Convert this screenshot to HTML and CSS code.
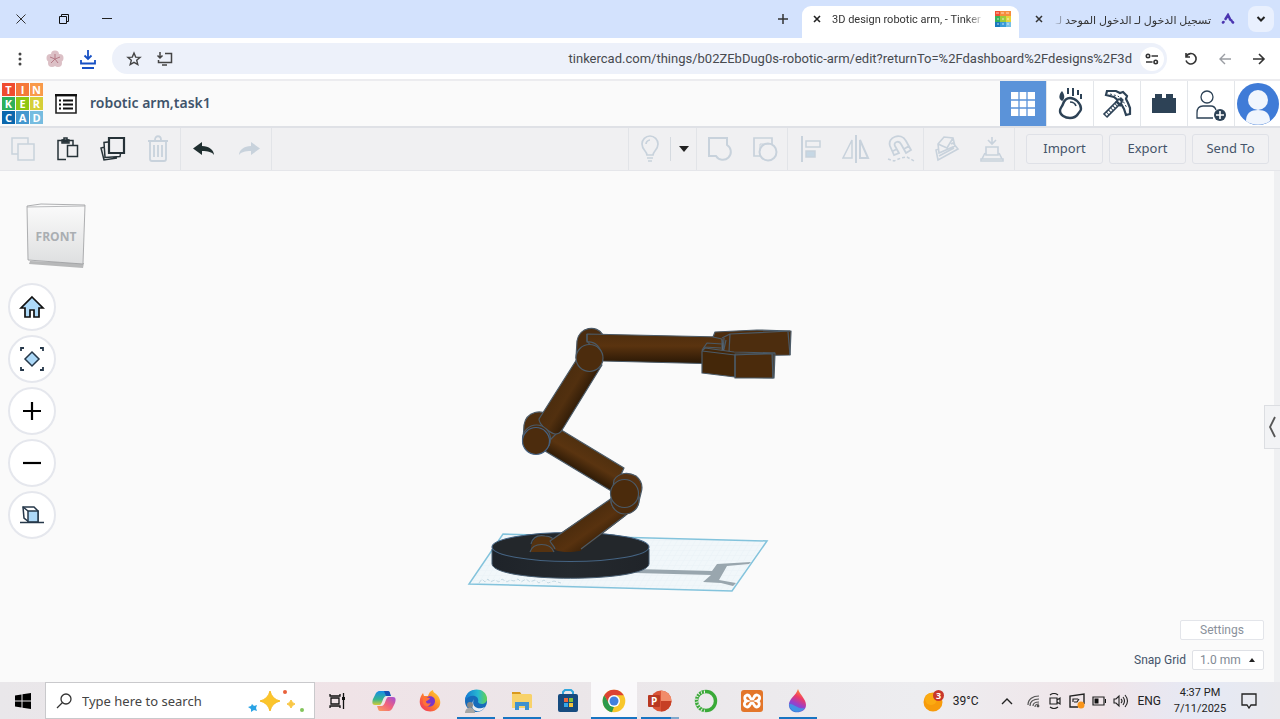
FILE: index.html
```html
<!DOCTYPE html>
<html lang="en">
<head>
<meta charset="utf-8">
<title>3D design robotic arm, - Tinkercad</title>
<link rel="stylesheet" href="styles.css">
</head>
<body>
<div class="tabstrip">
  <div class="window-controls">
    <button class="plain" aria-label="Close window"><svg width="12" height="12"><path d="M1.500 1.500l9 9m0-9l-9 9" stroke="#333" fill="none"/></svg></button>
    <button class="plain" aria-label="Restore window"><svg width="12" height="12"><path d="M1.500 3.500h7v7h-7zM3.500 3V1.500h7v7H9" stroke="#111" fill="none"/></svg></button>
    <button class="plain" aria-label="Minimize window"><svg width="12" height="12"><path d="M1 5.500h10" stroke="#222"/></svg></button>
  </div>
  <button class="plain new-tab" aria-label="New tab"><svg width="12" height="12"><path d="M6 1v10M1 6h10" stroke="#333" stroke-width="1.500"/></svg></button>
  <div class="tab tab-active">
    <button class="plain" aria-label="Close tab"><svg width="10" height="10"><path d="M2 2l6 6m0-6l-6 6" stroke="#222" stroke-width="1.600"/></svg></button>
    <span class="tab-title">3D design robotic arm, - Tinker</span>
    <svg width="16" height="16" viewBox="0 0 16 16"><path fill="#f04d32" d="M0 0h5v5H0z"/><path fill="#f68d3c" d="M5 0h11v5H5z"/><path fill="#35b25c" d="M0 5h5v6H0z"/><path fill="#9ccb3b" d="M5 5h6v6H5z"/><path fill="#e5d43b" d="M11 5h5v6h-5z"/><path fill="#1878bd" d="M0 11h5v5H0z"/><path fill="#399bd8" d="M5 11h6v5H5z"/><path fill="#78c0e4" d="M11 11h5v5h-5z"/><path d="M1 2h3M6 2h3M11 2h3M2 8h2M7 8h2M12 8h2M2 13h2M7 13h2M12 13h2" stroke="#fff" opacity=".7"/></svg>
  </div>
  <div class="tab tab-idle">
    <button class="plain" aria-label="Close tab"><svg width="10" height="10"><path d="M2 2l6 6m0-6l-6 6" stroke="#333" stroke-width="1.500"/></svg></button>
    <span class="tab-title" dir="rtl" lang="ar">تسجيل الدخول لـ الدخول الموحد لـ</span>
    <svg width="14" height="12" viewBox="0 0 14 12"><path d="M2 9.500l.5-.5M4.500 6L7 2l2 4M12 9.500l-.5-.5M9 6.500l1.500 1" fill="none" stroke="#4b35b0" stroke-width="2.500" stroke-linecap="round"/></svg>
  </div>
  <button class="plain tab-search" aria-label="Search tabs"><svg width="12" height="12"><path d="M2.500 4L6 7.500 9.500 4" fill="none" stroke="#222" stroke-width="2"/></svg></button>
</div>

<div class="addressbar">
  <button class="plain b-menu" aria-label="Browser menu"><svg width="6" height="16"><g fill="#444"><circle cx="3" cy="3" r="1.500"/><circle cx="3" cy="8" r="1.500"/><circle cx="3" cy="13" r="1.500"/></g></svg></button>
  <button class="plain b-left" aria-label="Profile"><svg width="18" height="18" viewBox="0 0 18 18"><g fill="#dcc0c6"><circle cx="9" cy="4.500" r="4"/><circle cx="13.500" cy="8" r="4"/><circle cx="12" cy="13" r="4"/><circle cx="6" cy="13" r="4"/><circle cx="4.500" cy="8" r="4"/></g><path d="M9 9V4m0 5l5-2M9 9l3 4M9 9l-4 4M9 9L4 7" stroke="#b57a86"/></svg></button>
  <button class="plain b-left" aria-label="Downloads"><svg width="16" height="20" viewBox="0 0 16 20"><path d="M8 1v9M4.500 6.500L8 10l3.500-3.500M1 11v3.500h14V11M2 19h12" fill="none" stroke="#1750c4" stroke-width="1.800"/></svg></button>
  <div class="omnibox">
    <button class="plain" aria-label="Bookmark"><svg width="16" height="16" viewBox="0 0 16 16"><path d="M8 2l1.700 4.100 4.400.3-3.400 2.900 1.100 4.300L8 11.300l-3.800 2.300 1.100-4.300-3.400-2.900 4.400-.3z" fill="none" stroke="#444" stroke-width="1.400"/></svg></button>
    <button class="plain" aria-label="Install app"><svg width="17" height="16" viewBox="0 0 17 16"><path d="M9 2.500h6.500v9h-13V9M6 14h5M4 1v6M1.500 4.500L4 7l2.500-2.500" fill="none" stroke="#444" stroke-width="1.500"/></svg></button>
    <input class="url" type="text" aria-label="Address" value="tinkercad.com/things/b02ZEbDug0s-robotic-arm/edit?returnTo=%2Fdashboard%2Fdesigns%2F3d">
    <button class="plain site-info" aria-label="Site information"><svg width="14" height="12" viewBox="0 0 14 12"><g fill="none" stroke="#333" stroke-width="1.600"><circle cx="3" cy="3" r="1.700"/><path d="M6.500 3H13M1 9h6.500"/><circle cx="10.700" cy="9" r="1.700"/></g></svg></button>
  </div>
  <button class="plain" aria-label="Reload"><svg width="14" height="14" viewBox="0 0 14 14"><path d="M2.500 4A5.200 5.200 0 1 1 2 8.500M2 1v4h4" fill="none" stroke="#333" stroke-width="1.600"/></svg></button>
  <button class="plain" aria-label="Forward"><svg width="14" height="14"><path d="M13 7H2m5-5L2 7l5 5" fill="none" stroke="#9a9da3" stroke-width="1.400"/></svg></button>
  <button class="plain" aria-label="Back"><svg width="14" height="14"><path d="M1 7h11M7 2l5 5-5 5" fill="none" stroke="#333" stroke-width="1.600"/></svg></button>
</div>

<header class="app-header">
  <a class="logo" href="#" aria-label="Tinkercad"><b class="c1">T</b><b class="c2">I</b><b class="c3">N</b><b class="c4">K</b><b class="c5">E</b><b class="c6">R</b><b class="c7">C</b><b class="c8">A</b><b class="c9">D</b></a>
  <button class="plain" aria-label="Designs"><svg width="22" height="20" viewBox="0 0 22 20"><path d="M1 1h20v18H1z" fill="#fff" stroke="#222" stroke-width="1.600"/><path d="M0 1.200h22" stroke="#111" stroke-width="2.400"/><path d="M8 6.500h10M8 10.500h10M8 14.500h10M4 6.500h2M4 10.500h2M4 14.500h2" stroke="#111" stroke-width="2"/></svg></button>
  <h1 class="design-name">robotic arm,task1</h1>
  <nav class="modes">
    <button class="mode mode-on" aria-label="3D design"><svg width="24" height="24"><path d="M0 0h24v24H0z" fill="#fff"/><path d="M8 0v24M16 0v24M0 8h24M0 16h24" stroke="#5b93d9" stroke-width="1.300"/></svg></button>
    <button class="mode" aria-label="Sim lab"><svg width="26" height="34" viewBox="0 0 26 34"><path d="M13 11c5 0 11 5 11 11 0 2-2 3-3 5-2 3-4 4-8 4-5 0-10-3-10-7 0-3 2-4 3-7s3-6 7-6z" fill="#fff" stroke="#2d4256" stroke-width="2.400"/><path d="M13 15c3 0 5 1 6 4" fill="none" stroke="#2d4256" stroke-width="1.600"/><path d="M11 1v6M16 1v8M21 3v5M24 7v5" stroke="#2d4256" stroke-width="2"/><path d="M5 4c3 4 3 8 0 10-4-2-3-7 0-10z" fill="#2d4256"/></svg></button>
    <button class="mode" aria-label="Blocks"><svg width="30" height="30" viewBox="0 0 30 30"><path d="M5 2h9l4 2 3-1 4 4-1 3 2 4 2 5v6l-4 1-2-6-4-7-6-5-8-2z" fill="#fff" stroke="#2d4256" stroke-width="2.200"/><path d="M8 5l8 2 5 5 4 7" fill="none" stroke="#2d4256" stroke-dasharray="2 2"/><path d="M19 11L3 27" stroke="#2d4256" stroke-width="6"/><path d="M18 12L4 26" stroke="#fff" stroke-width="2.500" stroke-dasharray="2 1"/><path d="M18 9l3 3M14 12l5 5" stroke="#2d4256" stroke-width="2.500"/></svg></button>
    <button class="mode" aria-label="Bricks"><svg width="26" height="22"><path d="M1 5h3V1h7v4h4V1h7v4h3v15H1z" fill="#2d4256"/></svg></button>
    <button class="mode" aria-label="Invite people"><svg width="32" height="34" viewBox="0 0 32 34"><g fill="none" stroke="#2d4256" stroke-width="1.300"><circle cx="12" cy="10" r="6"/><path d="M18 31H2v-5c0-5 3-7 6-7h8c2 0 4 1 5 4"/></g><circle cx="25" cy="28" r="6" fill="#2d4256"/><path d="M25 24v8M21 28h8" stroke="#fff" stroke-width="1.600"/></svg></button>
    <button class="plain avatar" aria-label="Account"><svg width="44" height="44" viewBox="0 0 44 44"><circle cx="22" cy="22" r="21" fill="#3f7bd7"/><circle cx="22" cy="18" r="10" fill="#f0f5fd"/><path d="M10 39c0-8 5-11 12-11s12 3 12 11a21 21 0 0 1-24 0z" fill="#f0f5fd"/></svg></button>
  </nav>
</header>

<div class="toolbar">
  <div class="group">
    <button class="tool" aria-label="Copy"><svg width="24" height="24" viewBox="0 0 24 24" class="off"><path d="M7 17H1V1h16v6M7 7h16v16H7z"/></svg></button>
    <button class="tool" aria-label="Paste"><svg width="24" height="24" viewBox="0 0 24 24" class="on"><path d="M10 22.500H2v-19h5M13 3.500h4V8M6 3v3h7V3h-2V1H8v2zM11.500 8.500h10v11h-10z"/><path d="M7 3h5v2H7z" fill="#263238"/></svg></button>
    <button class="tool" aria-label="Duplicate"><svg width="26" height="26" viewBox="0 0 26 26" class="on"><path d="M9 2h15v15H9z" stroke-width="2.200"/><path d="M8 6l-4 .5 1 15 15-1 .5-3M5 11l-4 1 3 12 13-2"/></svg></button>
    <button class="tool" aria-label="Delete"><svg width="22" height="28" viewBox="0 0 22 28" class="off"><path d="M1 6h20M8 5c0-5 6-5 6 0M3 7v17c0 2 1 2 2 2h12c2 0 2-1 2-2V7M7 10v12M11 10v12M15 10v12" stroke-width="1.800"/></svg></button>
  </div>
  <div class="group">
    <button class="tool" aria-label="Undo"><svg width="22" height="16" viewBox="0 0 22 16"><path d="M9 1v4c7 0 12 4 12 9-2-3-6-4-12-4v4L0 7.500z" fill="#202f30"/></svg></button>
    <button class="tool" aria-label="Redo"><svg width="22" height="16" viewBox="0 0 22 16"><path d="M13 1v4C6 5 1 9 1 14c2-3 6-4 12-4v4l9-6.500z" fill="#c8d2dc"/></svg></button>
  </div>
  <div class="group group-first">
    <button class="tool bulb" aria-label="Show all"><svg width="20" height="28" viewBox="0 0 20 28" class="off"><path d="M7 20c0-4-5-5-5-11a8 8 0 0 1 16 0c0 6-5 7-5 11zM7 23h6M8 26h4M10 5c-2 0-4 2-4 4" stroke-width="1.700"/></svg></button>
    <button class="tool caret" aria-label="Visibility options"><svg width="10" height="6"><path d="M0 0h10L5 6z" fill="#222"/></svg></button>
  </div>
  <div class="group">
    <button class="tool" aria-label="Group"><svg width="26" height="26" viewBox="0 0 26 26" class="off"><path d="M2 2h18v7a8 8 0 1 1-11 11L2 20z" stroke-width="2"/></svg></button>
    <button class="tool" aria-label="Ungroup"><svg width="26" height="26" viewBox="0 0 26 26" class="off"><path d="M8 20H2V2h18v6" stroke-width="1.700"/><circle cx="16" cy="16" r="8.500" stroke-width="2"/><path d="M8 15V8h9" stroke-width="1"/></svg></button>
  </div>
  <div class="group">
    <button class="tool" aria-label="Align"><svg width="22" height="26" viewBox="0 0 22 26" class="off"><path d="M2 0v26" stroke-width="2"/><path d="M6 5h14v6H6z"/><path d="M6 15h9v6H6z" fill="#c6d7e4"/></svg></button>
    <button class="tool" aria-label="Mirror"><svg width="28" height="28" viewBox="0 0 28 28" class="off"><path d="M14 0v28" stroke-width="2"/><path d="M10 5v18H1z"/><path d="M18 5v18h8z" stroke-width="2"/></svg></button>
    <button class="tool" aria-label="Magnet"><svg width="28" height="28" viewBox="0 0 28 28" class="off"><path d="M7 20L3 11C0 2 14-3 19 6l5 9-5 3-5-9c-2-4-8-2-6 2l4 7zM6 16l4-2M17 14l5-3" stroke-width="1.800"/><path d="M1 24l6 2 7-3 6-1 7 4" stroke-dasharray="3 2"/></svg></button>
  </div>
  <div class="group">
    <button class="tool" aria-label="Cruise"><svg width="28" height="28" viewBox="0 0 28 28" class="off"><path d="M6 14l-3 1 2 10 20-11-5-6-2 1M6 18L5 9l6-7 9 1 2 8zM5 9l9 4 6-10M6 21l15-8" stroke-width="1.600"/></svg></button>
    <button class="tool" aria-label="Drop to workplane"><svg width="24" height="26" viewBox="0 0 24 26" class="off"><path d="M12 1v7M8 4l4 4 4-4M6 19v-8h12v8zM5 17l-3 6h20l-3-6M1 23h22v2H1z" stroke-width="1.600"/></svg></button>
  </div>
  <div class="actions">
    <button class="action">Import</button>
    <button class="action">Export</button>
    <button class="action">Send To</button>
  </div>
</div>

<main class="workspace">
  <svg class="scene" viewBox="0 171 1280 511" role="img" aria-label="Robotic arm model on the workplane">
    <defs>
      <linearGradient id="tubeH" x1="0" y1="0" x2="0" y2="1"><stop offset="0" stop-color="#4e2e0e"/><stop offset=".4" stop-color="#5a330f"/><stop offset="1" stop-color="#281705"/></linearGradient>
      <linearGradient id="tubeA" gradientUnits="userSpaceOnUse" x1="556" y1="386" x2="582" y2="402"><stop offset="0" stop-color="#4a2c0e"/><stop offset=".5" stop-color="#52300f"/><stop offset="1" stop-color="#2d1a07"/></linearGradient>
      <linearGradient id="tubeB" gradientUnits="userSpaceOnUse" x1="594" y1="450" x2="580" y2="474"><stop offset="0" stop-color="#50300f"/><stop offset=".45" stop-color="#5a3410"/><stop offset="1" stop-color="#2a1805"/></linearGradient>
      <linearGradient id="tubeC" gradientUnits="userSpaceOnUse" x1="581" y1="519" x2="598" y2="543"><stop offset="0" stop-color="#4c2c0d"/><stop offset=".5" stop-color="#58320f"/><stop offset="1" stop-color="#382008"/></linearGradient>
      <linearGradient id="plate" x1="0" y1="0" x2="1" y2="0"><stop offset="0" stop-color="#1e2329"/><stop offset=".5" stop-color="#24292e"/><stop offset="1" stop-color="#202429"/></linearGradient>
      <pattern id="grid" width="6" height="5" patternUnits="userSpaceOnUse" patternTransform="skewX(-30)"><path d="M0 0h6v5" fill="none" stroke="#e6f0f5" stroke-width=".7"/></pattern>
    </defs>
    <path d="M503 534l264 7-35 50-263-7z" fill="#f1f7fa"/>
    <path d="M503 534l264 7-35 50-263-7z" fill="url(#grid)" stroke="#83c3dc" stroke-width="1.500"/>
    <path d="M479 583l3-4 3 3 3-3 2 3 5-2 4 2 3-3 5 3 3-2 4 1 4-2 3 3 5-3 4 3 5-2 4 3 5-3 4 3 6-2 7 2" fill="none" stroke="#c5dae4" stroke-dasharray="4 2"/>
    <path d="M636 569l76 2 5-7 34-2-2 2-22 2-8 14 17 3-3 3-12-3-18-1 8-7-75-2z" fill="#99a6ae"/>
    <path d="M492 549v15c2 19 155 19 157 0v-15z" fill="url(#plate)" stroke="#465c70"/>
    <ellipse cx="570.500" cy="547" rx="78.500" ry="14.500" fill="#23272b" stroke="#456483" stroke-width="1.100"/>
    <g stroke="#4b5a67" stroke-width="1.200" stroke-linejoin="round">
      <path d="M531 547c2-10 8-12 14-11 7 0 9 4 10 8l-2 8h-22z" fill="#553210" stroke="none"/>
      <path d="M531 544c2-8 8-9 14-8 6 0 9 3 10 7M530 552c3-10 20-10 24 0" fill="none"/>
      <path d="M612 498l-63 43c2 4 5 5 6 9 8 3 18 2 25 1l48-37z" fill="url(#tubeC)" stroke="none"/>
      <path d="M612 498l-62 43c2 4 4 5 5 8M626 515l-45 34" fill="none"/>
      <path d="M548 422l76 46-11 24-68-41z" fill="url(#tubeB)"/>
      <path d="M614 480c5-8 15-8 22-4 6 5 7 11 5 17l-3 12c-5 11-23 12-27-3z" fill="#553110"/>
      <circle cx="625" cy="500" r="14" fill="#4b2b0d"/>
      <circle cx="624.500" cy="493.500" r="14" fill="#4b2b0c"/>
      <path d="M523 440l1-15c2-13 18-18 27-7l8 13-10 10z" fill="#4e2e0f"/>
      <path d="M577 359l-38 60c0 7 12 14 16 15 3 0 6-2 7-4l40-65z" fill="url(#tubeA)"/>
      <circle cx="536.500" cy="439" r="14" fill="#4c2c0d"/>
      <circle cx="536" cy="441" r="13.500" fill="#4c2c0d" stroke="#466282"/>
      <path d="M576 358l1-17c2-14 20-17 26-6l1 25z" fill="#4b2c0f"/>
      <path d="M587 334l135 3v27l-119-3-16-20z" fill="url(#tubeH)"/>
      <path d="M587 334v8c9-1 14 6 15 14" fill="none"/>
      <circle cx="589.500" cy="358" r="13.500" fill="#4c2c0d"/>
      <path d="M713 337l2-5 42-2 34 1-1 24-65 1-3-17z" fill="#4d2d0e"/>
      <path d="M722 338l8-4 60-3M730 334l-1 18M724 338l-1 13M726 340l-2 9M788 332l2 23" fill="none"/>
      <path d="M702 350l5-7 15 1v7M704 347l17 1" fill="#51300f"/>
      <path d="M702 351l3-3 29 4 41 1-1 25-39-1-33-4z" fill="#442709"/>
      <path d="M735 354v24h38v-24z" fill="#4b2b0c"/>
      <path d="M702 351l33 4 40-2M735 355v22M772 354l1 24" fill="none"/>
    </g>
  </svg>
  <div class="overlay">
    <div class="left-rail">
      <button class="plain cube" aria-label="View cube"><svg width="60" height="66" viewBox="0 0 60 66"><defs><linearGradient id="face" x1="0" y1="0" x2="0" y2="1"><stop offset="0" stop-color="#fbfbfb"/><stop offset="1" stop-color="#dedfe0"/></linearGradient></defs><path d="M4 58l54 2-1 5-54-4z" fill="#b7b8b9"/><path d="M1 3l14-2 44 1-2 59-55-4z" fill="url(#face)" stroke="#9a9c9e" stroke-width=".8"/><path d="M1 4l58-1" fill="none" stroke="#a8aaac" stroke-width=".8"/><text x="30" y="38" text-anchor="middle" class="cube-text">FRONT</text></svg></button>
      <button class="round" aria-label="Home view"><svg width="26" height="24" viewBox="0 0 26 24"><path d="M13 2l11 11h-4v9h-5v-7h-4v7H6v-9H2z" fill="#add9f8" stroke="#111" stroke-width="1.700"/></svg></button>
      <button class="round" aria-label="Fit view"><svg width="26" height="26" viewBox="0 0 26 26" fill="none" stroke="#26384a"><path d="M13 6l7 7-7 7-7-7z" fill="#add9f8" stroke-width="1.500"/><path d="M2 5V2h3M21 2h3v3M24 21v3h-3M5 24H2v-3" stroke-width="1.800"/></svg></button>
      <button class="round" aria-label="Zoom in"><svg width="20" height="20"><path d="M10 1v18M1 10h18" stroke="#000" stroke-width="2.200"/></svg></button>
      <button class="round" aria-label="Zoom out"><svg width="20" height="20"><path d="M1 10h18" stroke="#000" stroke-width="2.200"/></svg></button>
      <button class="round" aria-label="Orthographic view"><svg width="24" height="20" viewBox="0 0 24 20"><path d="M3 2h11l4 4v11H9l-5-4z" fill="#fff" stroke="#26384a" stroke-width="1.500"/><path d="M8 6h10v11H8z" fill="#add9f8" stroke="#26384a" stroke-width="1.500"/><path d="M3 2l5 4M0 17.500h24" stroke="#26384a" stroke-width="1.500"/></svg></button>
    </div>
    <div class="snap">
      <button class="settings">Settings</button>
      <div class="snap-row">
        <label for="snap">Snap Grid</label>
        <div class="select-box"><select id="snap"><option>1.0 mm</option></select><svg width="6" height="4"><path d="M0 4h6L3 0z" fill="#222"/></svg></div>
      </div>
    </div>
  </div>
  <aside class="edge">
    <button class="expand" aria-label="Open shapes panel"><svg width="8" height="22"><path d="M7 1L2 11l5 10" fill="none" stroke="#555" stroke-width="1.800"/></svg></button>
  </aside>
</main>

<footer class="taskbar">
  <button class="task start" aria-label="Start"><svg width="16" height="16"><path d="M0 2.500l6.500-1v6H0zM7.500 1.300L16 0v7.500H7.500zM0 8.500h6.500v6l-6.500-1zM7.500 8.500H16V16l-8.500-1.300z" fill="#000"/></svg></button>
  <div class="search">
    <svg width="16" height="16"><circle cx="10" cy="6" r="5" fill="none" stroke="#333" stroke-width="1.300"/><path d="M6.500 9.500L1 15" stroke="#333" stroke-width="1.300"/></svg>
    <input type="text" aria-label="Search" placeholder="Type here to search">
    <svg width="58" height="26" viewBox="0 0 58 26"><path d="M22 3q2 8 10 10-8 2-10 10-2-8-10-10 8-2 10-10z" fill="#fbc52c" stroke="#f8bc22" stroke-linejoin="round"/><path d="M43 12q1 3 4 4-3 1-4 4-1-3-4-4 3-1 4-4z" fill="#f9c746" stroke="#f9c746" stroke-linejoin="round"/><path d="M4 16l2 2 3-1-1 3 1 3-3-1-3 2V21l-3-2 3-1z" fill="#2aa3e5"/><circle cx="37" cy="4" r="2" fill="#e9613a"/><circle cx="54" cy="22" r="2" fill="#83c45b"/></svg>
  </div>
  <div class="apps">
    <button class="task" aria-label="Task view"><svg width="18" height="16" viewBox="0 0 18 16"><path d="M1 1v2h10V1M2 5h8v6H2zM1 15v-2h10v2M14.500 0v16" fill="none" stroke="#111" stroke-width="1.300"/><path d="M13 4h3v3h-3z" fill="#111"/></svg></button>
    <button class="task" aria-label="Copilot"><svg width="24" height="22" viewBox="0 0 24 22"><defs><linearGradient id="cpa" x1="0" y1="0" x2="0" y2="1"><stop stop-color="#168ce8"/><stop offset=".6" stop-color="#38b58e"/><stop offset="1" stop-color="#d5cc36"/></linearGradient><linearGradient id="cpb" x1="1" y1="0" x2="0" y2="1"><stop stop-color="#a04fd8"/><stop offset=".5" stop-color="#f1617c"/><stop offset="1" stop-color="#faa35c"/></linearGradient></defs><path d="M7 1h9c2 0 2 3 3 5h-5c-3 0-4 9-6 9H3c-3 0-3-3-2-6l3-6c1-1 2-2 3-2z" fill="url(#cpa)"/><path d="M17 21H8c-2 0-2-3-3-5h5c3 0 4-9 6-9h5c3 0 3 3 2 6l-3 6c-1 1-2 2-3 2z" fill="url(#cpb)"/><path d="M12 1h4c2 0 2 3 3 5h-5z" fill="#1650b5"/></svg></button>
    <button class="task" aria-label="Firefox"><svg width="22" height="24" viewBox="0 0 22 24"><defs><linearGradient id="fox" x1="1" y1="0" x2="0" y2="1"><stop stop-color="#ffdf34"/><stop offset=".5" stop-color="#ff8129"/><stop offset="1" stop-color="#ee2868"/></linearGradient></defs><path d="M14 1c0 3 3 3 5 6 3 4 3 9 0 12-5 6-16 4-18-4-1-5 1-8 3-11l1 3 4 0c1-3 2-5 5-6z" fill="url(#fox)"/><path d="M7 9c3-3 9-2 9 3 0 4-4 7-8 5-3-1-3-5-1-8z" fill="#7b36c8"/><path d="M4 9c3-2 4 0 7 0-1 3-4 2-4 4 1 2 4 2 5 0-1 5-6 6-8 1z" fill="#ff7237"/></svg></button>
    <button class="task running" aria-label="Edge"><svg width="24" height="24" viewBox="0 0 24 24"><defs><linearGradient id="edg"><stop stop-color="#1478d4"/><stop offset=".6" stop-color="#27b9d0"/><stop offset="1" stop-color="#64d34e"/></linearGradient></defs><circle cx="12" cy="12" r="11" fill="#176bba"/><path d="M1 12C1-3 23-3 23 10c0 6-8 6-9 3 2-7-9-9-13-1z" fill="url(#edg)"/><path d="M10 10c-3 6 2 12 11 8-5 8-18 4-11-8z" fill="#ebedf1"/><circle cx="6" cy="16" r="3" fill="#888"/><path d="M1 24c0-7 10-7 10 0z" fill="#a6a6a6"/></svg></button>
    <button class="task running" aria-label="File Explorer"><svg width="22" height="20" viewBox="0 0 22 20"><path d="M1 1h8l2 3H1z" fill="#d99a1e"/><path d="M1 3h19l1 1v13H1z" fill="#f8d26a"/><path d="M4 19v-8h14v8h-4v-4H8v4z" fill="#3e91ce"/></svg></button>
    <button class="task" aria-label="Microsoft Store"><svg width="22" height="24" viewBox="0 0 22 24"><path d="M6 6V3l2-2h6l2 2v3" fill="none" stroke="#30a6dc" stroke-width="2"/><rect x="1" y="5" width="20" height="18" rx="2" fill="#164b7f"/><path d="M7 9h4v4H7z" fill="#ed663d"/><path d="M12 9h4v4h-4z" fill="#83be3c"/><path d="M7 14h4v4H7z" fill="#36a7e8"/><path d="M12 14h4v4h-4z" fill="#f6c33b"/></svg></button>
    <button class="task running current" aria-label="Chrome"><svg width="24" height="24" viewBox="0 0 24 24"><circle cx="12" cy="12" r="11.300" fill="#f8c72c"/><path d="M2.200 6.300A11.300 11.300 0 0 1 21.800 6.300H12L7 15z" fill="#dc4334"/><path d="M2.200 6.300L7.100 14.800 12 17.700l-2 5.500A11.300 11.300 0 0 1 2.200 6.300z" fill="#2d9a4b"/><circle cx="12" cy="12" r="6" fill="#fff"/><circle cx="12" cy="12" r="4.500" fill="#4280df"/></svg></button>
    <button class="task running split" aria-label="PowerPoint"><svg width="24" height="22" viewBox="0 0 24 22"><circle cx="13" cy="11" r="10.500" fill="#d95336"/><path d="M13 .5A10.500 10.500 0 0 1 23.500 11H13z" fill="#f18b69"/><path d="M13 11h10.500A10.500 10.500 0 0 1 13 21.500z" fill="#c64025"/><rect y="5" width="12" height="12" rx="1" fill="#b83821"/><text x="3" y="15" class="ppt-letter">P</text></svg></button>
    <button class="task" aria-label="Anaconda"><svg width="24" height="24" viewBox="0 0 24 24"><circle cx="12" cy="12" r="9.500" fill="none" stroke="#3aaa38" stroke-width="3.400"/><path d="M11 3C4 3 1 8 3 14s6 8 8 8" fill="none" stroke="#ede9eb" stroke-width="3" stroke-dasharray="1 2"/></svg></button>
    <button class="task" aria-label="XAMPP"><svg width="24" height="24" viewBox="0 0 24 24"><rect x="1" y="1" width="22" height="22" rx="3" fill="#e3762a"/><path d="M7 6c4 0 2 4 5 4s1-4 5-4c4 1 3 5 0 6 3 1 3 5 0 6-4 0-2-4-5-4s-1 4-5 4c-4-1-3-5 0-6-3-1-3-5 0-6z" fill="none" stroke="#fff" stroke-width="2.800"/></svg></button>
    <button class="task running" aria-label="Paint 3D"><svg width="20" height="24" viewBox="0 0 20 24"><defs><linearGradient id="drop" x1=".7" y1="0" x2=".3" y2="1"><stop stop-color="#ff9a2c"/><stop offset=".35" stop-color="#ed3a68"/><stop offset=".65" stop-color="#963fcd"/><stop offset="1" stop-color="#3b77d9"/></linearGradient></defs><path d="M10 0c2 6 8 10 8 16 0 9-16 10-17 1C0 10 8 7 10 0z" fill="url(#drop)"/><path d="M1 15c5-1 9 6 16 4-4 6-15 5-16-4z" fill="#34a8ed" opacity=".7"/></svg></button>
  </div>
  <div class="tray">
    <button class="plain weather"><svg width="22" height="24" viewBox="0 0 22 24"><circle cx="10" cy="13" r="9.500" fill="#f79b0b"/><circle cx="8" cy="10" r="6" fill="#fbab12"/><circle cx="15.500" cy="6.500" r="5.500" fill="#c8372b"/><text x="13" y="10" class="badge-text">3</text></svg><span>39°C</span></button>
    <button class="plain" aria-label="Hidden icons"><svg width="12" height="8"><path d="M1 7l5-5 5 5" fill="none" stroke="#222" stroke-width="1.400"/></svg></button>
    <div class="tray-icons">
      <button class="plain" aria-label="Network"><svg width="14" height="14" viewBox="0 0 14 14" fill="none" stroke="#555"><path d="M1 11C1 5 6 2 12 2M3 12c0-5 4-7 9-7M6 12c0-3 3-4 6-4M8 13c0-2 2-3 4-3" stroke-width="1.200"/><circle cx="11" cy="12" r="1" fill="#111"/></svg></button>
      <button class="plain" aria-label="Meet now"><svg width="14" height="16" viewBox="0 0 14 16" fill="none" stroke="#222" stroke-width="1.200"><path d="M2 5h7v6H2zM9 7l3-2v6L9 9M2 2q4-3 8 0M2 14q4 3 8 0"/></svg></button>
      <button class="plain" aria-label="Updates"><svg width="16" height="16" viewBox="0 0 16 16"><path d="M9 14H1V3l14-2v10" fill="none" stroke="#222" stroke-width="1.400"/><path d="M4 9V6h5M10 6l-2 3H5" fill="none" stroke="#222" stroke-width="1.200"/><circle cx="12" cy="12" r="3.500" fill="#f9951b"/></svg></button>
      <button class="plain" aria-label="Battery"><svg width="14" height="10"><path d="M1 1h11v8H1z" fill="none" stroke="#222" stroke-width="1.200"/><path d="M2.500 2.500h4v5h-4zM13 3h1v4h-1z" fill="#111"/></svg></button>
      <button class="plain" aria-label="Volume"><svg width="16" height="14" viewBox="0 0 16 14" fill="none" stroke="#222" stroke-width="1.100"><path d="M1 5h2l3-3v10L3 9H1zM8 5q2 2 0 4M10 3q3 4 0 8M12 1q5 6 0 12"/></svg></button>
    </div>
    <button class="plain lang">ENG</button>
    <button class="plain clock"><span>4:37 PM</span><span>7/11/2025</span></button>
    <button class="plain" aria-label="Notifications"><svg width="16" height="16"><path d="M1 1h14v11h-5l-2 3-2-3H1z" fill="none" stroke="#222" stroke-width="1.300"/></svg></button>
  </div>
</footer>
</body>
</html>
```
FILE: styles.css
```css
* { box-sizing: border-box; }
body {
  margin: 0;
  min-height: 100vh;
  display: flex;
  flex-direction: column;
  font-family: "Noto Sans", "Open Sans", sans-serif;
  font-size: 13px;
  color: #44546a;
  background: #fafafa;
}
svg { display: block; flex: none; }
button { font: inherit; color: inherit; cursor: pointer; }
.plain {
  display: flex;
  align-items: center;
  justify-content: center;
  padding: 0;
  border: 0;
  background: none;
}

/* browser tabs */
.tabstrip {
  display: flex;
  align-items: center;
  height: 38px;
  padding: 0 6px 0 15px;
  background: #d3e2fd;
}
.window-controls { display: flex; gap: 31px; flex: 1; }
.new-tab { margin-right: 13px; }
.tab { display: flex; align-items: center; height: 32px; color: #333; font-size: 11px; }
.tab-title { flex: 1; overflow: hidden; white-space: nowrap; }
.tab-active {
  align-self: flex-end;
  width: 217px;
  gap: 10px;
  padding: 0 8px 6px 10px;
  border-radius: 9px 9px 0 0;
  background: #fff;
}
.tab-active .tab-title {
  font-family: Roboto, "Noto Sans", sans-serif;
  font-size: 11px;
  -webkit-mask-image: linear-gradient(to right, #000 88%, transparent);
  mask-image: linear-gradient(to right, #000 88%, transparent);
}
.tab-idle { width: 229px; gap: 10px; padding: 0 13px 0 15px; }
.tab-idle .tab-title {
  font-family: "Noto Sans", "DejaVu Sans", sans-serif;
  -webkit-mask-image: linear-gradient(to left, #000 90%, transparent);
  mask-image: linear-gradient(to left, #000 90%, transparent);
}
.tab-search { width: 26px; height: 26px; border-radius: 8px; background: #e9f0fe; }

/* address row */
.addressbar {
  display: flex;
  align-items: center;
  gap: 20px;
  height: 43px;
  padding: 0 14px 0 17px;
  border-bottom: 2px solid #ececef;
  background: #fff;
}
.addressbar .b-menu { margin-right: 3px; }
.addressbar .b-left { margin-right: -4px; }
.omnibox {
  display: flex;
  align-items: center;
  gap: 14px;
  flex: 1;
  height: 31px;
  margin-right: -3px;
  padding: 0 3px 0 14px;
  border-radius: 16px;
  background: #edf1fa;
}
.url {
  flex: 1;
  min-width: 0;
  padding: 0;
  border: 0;
  background: none;
  font: 13px Roboto, "Noto Sans", sans-serif;
  color: #474a4f;
  text-align: right;
}
.omnibox .site-info { width: 24px; height: 24px; margin-left: -6px; border-radius: 12px; background: #fff; }

/* application header */
.app-header {
  display: flex;
  align-items: center;
  height: 47px;
  padding-left: 2px;
  border-bottom: 2px solid #dfe1e6;
  background: #fafafa;
}
.logo {
  display: grid;
  grid-template-columns: repeat(3, 13px);
  grid-auto-rows: 13px;
  gap: 1px;
  margin-right: 12px;
  color: #fff;
  font-family: "Open Sans", sans-serif;
  font-size: 11px;
  line-height: 13px;
  text-align: center;
  text-decoration: none;
}
.c1 { background: #f04b2f; } .c2 { background: #f5783a; } .c3 { background: #f99a4a; }
.c4 { background: #2db05a; } .c5 { background: #8dc612; } .c6 { background: #d6cf38; }
.c7 { background: #0b67ad; } .c8 { background: #4397cf; } .c9 { background: #76bce0; }
.design-name { flex: 1; margin: 0 0 2px 13px; font-size: 14px; font-weight: 600; color: #3f546b; }
.modes { display: flex; align-self: stretch; background: #fff; }
.mode {
  display: flex;
  align-items: center;
  justify-content: center;
  width: 47px;
  padding: 0;
  border: 0;
  border-right: 1px solid #e3e6ea;
  background: #fff;
}
.mode-on { background: #5b93d9; }
.avatar { width: 45px; }

/* editing tools */
.toolbar { display: flex; height: 43px; border-bottom: 1px solid #e5e6ea; background: #f0f0f2; }
.group { display: flex; border-right: 1px solid #e2e4e8; }
.group-first { margin-left: auto; border-left: 1px solid #e2e4e8; }
.tool {
  display: flex;
  align-items: center;
  justify-content: center;
  width: 45px;
  padding: 0;
  border: 0;
  background: none;
}
.tool.bulb { width: 41px; }
.tool.caret { align-self: center; width: 26px; height: 24px; border-left: 1px solid #d5dae0; }
.off, .on { fill: none; stroke: #c8d2dc; stroke-width: 1.5; }
.on { stroke: #263238; }
.actions { display: flex; align-items: center; gap: 6px; padding: 0 11px; }
.action {
  width: 77px;
  height: 30px;
  padding: 0 0 2px;
  border: 1px solid #dfe1e7;
  border-radius: 3px;
  background: #f1f1f3;
}

/* 3D viewport */
.workspace { flex: 1; display: grid; grid-template-columns: 1fr 16px; min-height: 510px; }
.scene { grid-area: 1 / 1 / 2 / 3; width: 100%; height: 100%; }
.overlay {
  grid-area: 1 / 1;
  z-index: 1;
  display: flex;
  justify-content: space-between;
  padding: 32px 0 12px 8px;
}
.left-rail { display: flex; flex-direction: column; gap: 4px; }
.left-rail .cube { margin: 0 0 10px 18px; }
.cube-text { font: 700 12px "Open Sans", sans-serif; fill: #aaaeb2; }
.round {
  display: flex;
  align-items: center;
  justify-content: center;
  width: 48px;
  height: 48px;
  padding: 0;
  border: 2px solid #e5e7ed;
  border-radius: 50%;
  background: #fff;
}
.snap {
  align-self: flex-end;
  display: flex;
  flex-direction: column;
  align-items: flex-end;
  gap: 10px;
  font-family: Roboto, "Noto Sans", sans-serif;
  font-size: 12px;
}
.settings {
  width: 84px;
  height: 20px;
  padding: 0;
  border: 1px solid #e3e5ea;
  border-radius: 2px;
  background: #fff;
  color: #8a919b;
}
.snap-row { display: flex; align-items: center; gap: 6px; }
.select-box { display: flex; align-items: center; width: 72px; height: 20px; padding: 0 8px 0 7px; border: 1px solid #dfe1e6; border-radius: 2px; background: #fff; }
.select-box select {
  flex: 1;
  min-width: 0;
  appearance: none;
  padding: 0;
  border: 0;
  background: none;
  color: #828a95;
  font: inherit;
}
.edge { grid-area: 1 / 2; display: flex; align-items: center; background: linear-gradient(to right, transparent 10px, #eff0f2 10px); }
.expand { width: 16px; height: 44px; padding: 0 0 0 3px; border: 1px solid #dcdee2; border-right: 0; background: #f2f3f5; }

/* desktop taskbar */
.taskbar {
  display: flex;
  height: 37px;
  background: linear-gradient(to right, #e9e7ea, #f0e3e7 27%, #ebe6e9 45%, #ededf0 72%, #f0e5e9 86%, #e5e9f5 94%, #e9e9ed);
  color: #222;
}
.task { position: relative; display: flex; align-items: center; justify-content: center; width: 46px; padding: 0; border: 0; background: none; }
.task.start { width: 45px; }
.search { display: flex; align-items: center; width: 270px; padding: 0 8px 0 10px; border: 1px solid #c9c9cc; background: #fff; }
.search input { flex: 1; min-width: 0; margin-left: 10px; padding: 0; border: 0; background: none; font: inherit; }
.search input::placeholder { color: #444; opacity: 1; }
.apps { display: flex; }
.running::after { content: ""; position: absolute; inset: auto 4px 0; height: 2px; background: #1975c2; }
.current { background: #faf9fb; }
.current::after { inset: auto 0 0; }
.split::after { background: linear-gradient(to right, #1975c2 80%, #80a9cd 80%); }
.ppt-letter { font: 700 10px "Open Sans", sans-serif; fill: #fff; }
.tray {
  display: flex;
  align-items: center;
  flex: 1;
  justify-content: flex-end;
  gap: 14px;
  padding-right: 23px;
  font-family: Roboto, "Noto Sans", sans-serif;
  font-size: 12px;
}
.weather { gap: 8px; margin-right: 9px; }
.badge-text { font: 700 9px "Open Sans", sans-serif; fill: #fff; }
.tray-icons { display: flex; align-items: center; gap: 7px; }
.lang { margin-left: -6px; }
.clock { flex-direction: column; width: 50px; margin-right: 2px; font-size: 11px; line-height: 16px; }
```
